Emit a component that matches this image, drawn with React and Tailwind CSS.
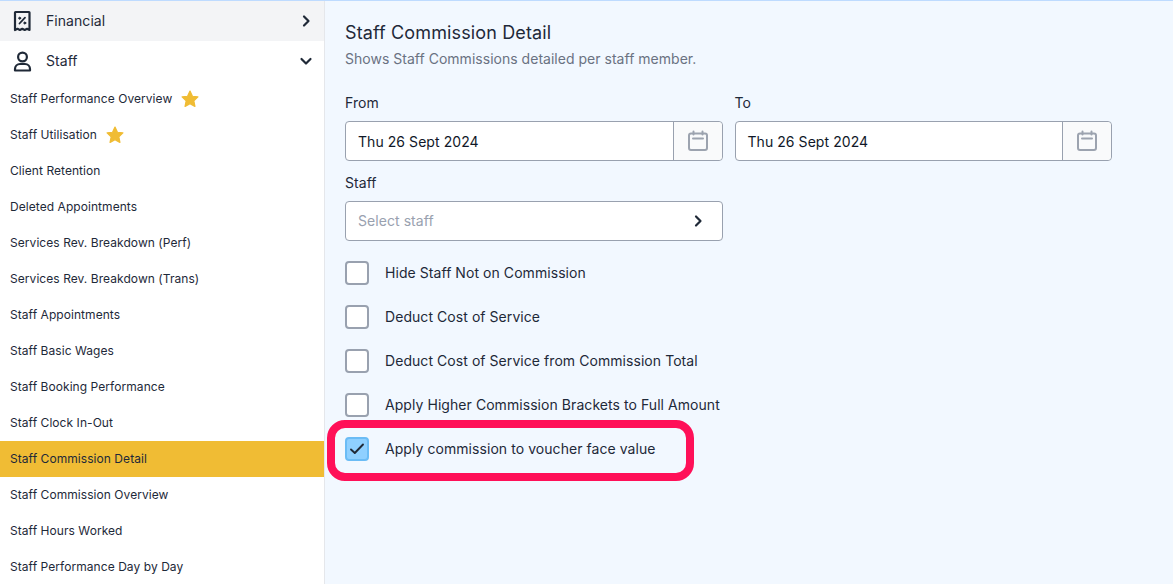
const reports = [
  { name: "Staff Performance Overview", star: true },
  { name: "Staff Utilisation", star: true },
  { name: "Client Retention" },
  { name: "Deleted Appointments" },
  { name: "Services Rev. Breakdown (Perf)" },
  { name: "Services Rev. Breakdown (Trans)" },
  { name: "Staff Appointments" },
  { name: "Staff Basic Wages" },
  { name: "Staff Booking Performance" },
  { name: "Staff Clock In-Out" },
  { name: "Staff Commission Detail", active: true },
  { name: "Staff Commission Overview" },
  { name: "Staff Hours Worked" },
  { name: "Staff Performance Day by Day" },
];

const options = [
  "Hide Staff Not on Commission",
  "Deduct Cost of Service",
  "Deduct Cost of Service from Commission Total",
  "Apply Higher Commission Brackets to Full Amount",
];

const ReceiptIcon = () => (
  <svg width="24" height="24" viewBox="0 0 24 24" fill="none" stroke="#1f2937" strokeWidth="2.200" strokeLinejoin="round" strokeLinecap="round">
    <path d="M5 3.500a.5.5 0 0 1 .5-.5h13.500a.5.5 0 0 1 .5.500V21l-2.400-1.200-2.400 1.200-2.400-1.200-2.400 1.200-2.400-1.200L5 21z" />
    <path d="M9.500 14.500l5.500-5.800" strokeWidth="1.800" />
    <circle cx="9.700" cy="9.200" r="1" fill="#1f2937" strokeWidth="1" />
    <circle cx="14.800" cy="14" r="1" fill="#1f2937" strokeWidth="1" />
  </svg>
);

const PersonIcon = () => (
  <svg width="24" height="24" viewBox="0 0 24 24" fill="none" stroke="#1f2937" strokeWidth="2.200" strokeLinejoin="round">
    <circle cx="12.500" cy="8" r="4.400" />
    <path d="M5 21.500v-1.500a5 5 0 0 1 5-5h5a5 5 0 0 1 5 5v1.500z" />
  </svg>
);

const Chevron = ({ down }) => (
  <svg width="16" height="16" viewBox="0 0 16 16" fill="none" stroke="#1f2937" strokeWidth="2.200" strokeLinecap="round" strokeLinejoin="round">
    <path d={down ? "M3.500 6l4.500 4.500L12.500 6" : "M6 3.500L10.500 8 6 12.500"} />
  </svg>
);

const Star = () => (
  <svg width="20" height="20" viewBox="0 0 24 24" fill="#f0bc34" stroke="#f0bc34" strokeWidth="1.500" strokeLinejoin="round">
    <path d="M12 2.500l2.900 6.200 6.600.800-4.900 4.600 1.300 6.700L12 17.500l-5.900 3.300 1.300-6.700-4.900-4.600 6.600-.800z" />
  </svg>
);

const CalendarIcon = () => (
  <svg width="22" height="22" viewBox="0 0 22 22" fill="none" stroke="#9ca3af" strokeWidth="2" strokeLinecap="round" strokeLinejoin="round">
    <rect x="2" y="3.500" width="18" height="16.500" rx="2" />
    <path d="M6.500 1.500v3M15.500 1.500v3M6 8.500h10" />
  </svg>
);

const DateField = ({ label, value }) => (
  <div>
    <div className="text-sm leading-5 text-gray-800 mb-2">{label}</div>
    <div className="flex h-10 bg-white border border-gray-400 rounded">
      <div className="flex-1 flex items-center pl-3 pt-px text-sm text-gray-900">{value}</div>
      <div className="w-[49px] flex items-center justify-center bg-gray-50 border-l border-gray-400 rounded-r">
        <CalendarIcon />
      </div>
    </div>
  </div>
);

const App = () => {
  return (
    <div className="w-[1173px] h-[584px] overflow-hidden flex flex-col bg-[#f2f8ff] font-['Inter',sans-serif] tracking-[0.06px]">
      <div className="h-px bg-blue-200" />
      <div className="flex flex-1 min-h-0">
        {/* Sidebar */}
        <div className="w-[325px] shrink-0 bg-white border-r border-gray-200">
          <div className="h-10 flex items-center bg-gray-100 pl-[10px] pr-[10px]">
            <ReceiptIcon />
            <span className="ml-3 text-sm text-gray-800 flex-1">Financial</span>
            <Chevron />
          </div>
          <div className="h-10 flex items-center pl-[10px] pr-[10px]">
            <PersonIcon />
            <span className="ml-3 text-sm text-gray-800 flex-1">Staff</span>
            <Chevron down />
          </div>
          {reports.map((r) => (
            <div
              key={r.name}
              className={`h-9 flex items-center pl-[10px] text-xs text-gray-800 ${r.active ? "bg-[#f0bc34]" : ""}`}
            >
              <span>{r.name}</span>
              {r.star && (
                <span className="ml-2">
                  <Star />
                </span>
              )}
            </div>
          ))}
        </div>

        {/* Report form */}
        <div className="flex-1 pl-5 pt-[20px]">
          <h1 className="text-lg leading-[24px] text-gray-800 tracking-[0.13px]">Staff Commission Detail</h1>
          <p className="mt-[4px] text-sm leading-5 text-gray-500 tracking-[0.02px]">Shows Staff Commissions detailed per staff member.</p>

          <div className="mt-[24px] w-[767px] grid grid-cols-2 gap-x-3">
            <DateField label="From" value="Thu 26 Sept 2024" />
            <DateField label="To" value="Thu 26 Sept 2024" />
          </div>

          <div className="mt-3 text-sm leading-5 text-gray-800 mb-2">Staff</div>
          <div className="w-[378px] h-10 flex items-center justify-between bg-white border border-gray-400 rounded pl-3 pr-4">
            <span className="text-sm text-gray-400">Select staff</span>
            <Chevron />
          </div>

          <div className="mt-5 flex flex-col gap-5">
            {options.map((o) => (
              <div key={o} className="flex items-center h-6">
                <span className="w-6 h-6 bg-white border-2 border-gray-400 rounded" />
                <span className="ml-4 text-sm text-gray-800">{o}</span>
              </div>
            ))}
            <div className="relative flex items-center h-6">
              <span className="w-6 h-6 flex items-center justify-center bg-[#8fd0ff] border-2 border-[#6bbcf5] rounded">
                <svg width="16" height="16" viewBox="0 0 16 16" fill="none" stroke="#1f2937" strokeWidth="1.900" strokeLinecap="round" strokeLinejoin="round">
                  <path d="M2 8.500l3.800 3.500L14 3.500" />
                </svg>
              </span>
              <span className="ml-4 text-sm text-gray-800">Apply commission to voucher face value</span>
              {/* annotation around the ticked option */}
              <div className="absolute left-[-18px] top-[-17px] w-[367px] h-[61px] border-[8px] border-[#ff1058] rounded-[18px]" />
            </div>
          </div>
        </div>
      </div>
    </div>
  );
};

export default App;
